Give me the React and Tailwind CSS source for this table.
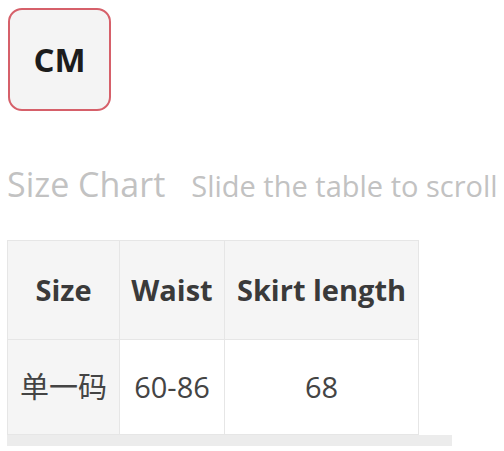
import React from 'react';

const font = { fontFamily: '"Open Sans", "Noto Sans CJK SC", sans-serif' };

const App = () => {
    return (
        <div className="w-[504px] h-[451px] bg-white overflow-hidden" style={font}>
            {/* Unit toggle */}
            <div className="pl-[8px] pt-[8px]">
                <div className="w-[103px] h-[103px] rounded-[14px] border-2 border-[#d6606a] bg-[#f4f4f4] flex items-center justify-center">
                    <span className="text-[33px] font-bold text-[#1c1c1c]">CM</span>
                </div>
            </div>

            {/* Title */}
            <div className="flex items-baseline whitespace-nowrap pl-[7px] mt-[56px]">
                <span className="text-[34px] text-[#c2c2c2] leading-none">Size Chart</span>
                <span className="text-[29px] text-[#c2c2c2] leading-none ml-[26px]">Slide the table to scroll</span>
            </div>

            {/* Table */}
            <div className="pl-[7px] mt-[39px] w-[452px]">
                <table className="border-collapse text-[#444]">
                    <tbody>
                        <tr className="h-[99px] bg-[#f5f5f5]">
                            <th className="w-[112px] border border-[#e6e6e6] text-[29px] font-bold text-[#3a3a3a]">Size</th>
                            <th className="w-[105px] border border-[#e6e6e6] text-[29px] font-bold text-[#3a3a3a]">Waist</th>
                            <th className="w-[194px] border border-[#e6e6e6] text-[29px] font-bold text-[#3a3a3a]">Skirt length</th>
                        </tr>
                        <tr className="h-[95px]">
                            <th className="border border-[#e6e6e6] bg-[#f5f5f5] text-[29px] font-normal text-[#444]">单一码</th>
                            <td className="border border-[#e6e6e6] text-center text-[29px]">60-86</td>
                            <td className="border border-[#e6e6e6] text-center text-[29px]">68</td>
                        </tr>
                    </tbody>
                </table>
                <div className="h-[11px] bg-[#ececec]" />
            </div>
        </div>
    );
};

export default App;
